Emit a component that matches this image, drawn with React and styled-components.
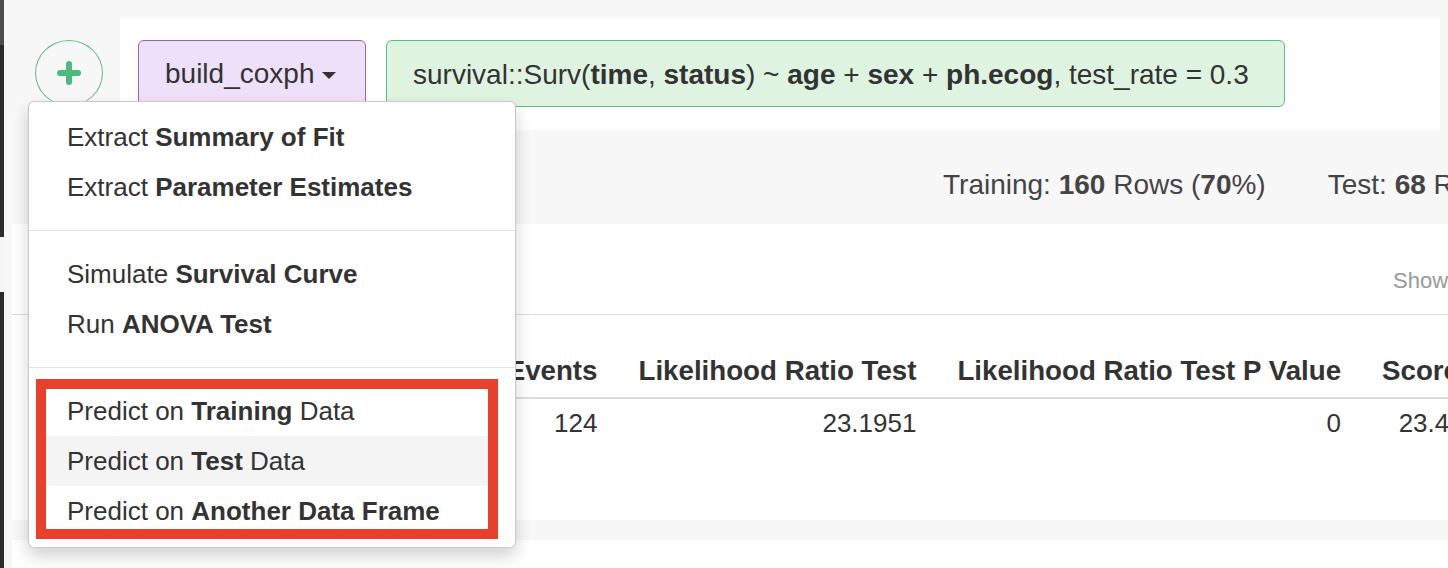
import React from 'react';
import styled, { createGlobalStyle } from 'styled-components';

const GlobalStyle = createGlobalStyle`
  html, body {
    margin: 0;
    padding: 0;
    background: #f7f7f7;
    font-family: "Liberation Sans", Arial, sans-serif;
    color: #333;
    overflow: hidden;
  }
`;

const Page = styled.div`
  position: relative;
  display: flex;
  width: 1448px;
  height: 568px;
  overflow: hidden;
`;

const Strip = styled.div`
  width: 4px;
  display: flex;
  flex-direction: column;
  flex-shrink: 0;
`;

const StripPart = styled.div`
  height: ${(props) => props.h}px;
  flex: ${(props) => (props.h ? 'none' : 1)};
  background: ${(props) => props.color};
`;

const Main = styled.div`
  flex: 1;
  min-width: 0;
  display: flex;
  flex-direction: column;
  padding-top: 18px;
`;

const Header = styled.div`
  display: flex;
  height: 112px;
`;

const PlusArea = styled.div`
  width: 116px;
  flex-shrink: 0;
  padding: 22px 0 0 31px;
  box-sizing: border-box;
`;

const PlusCircle = styled.div`
  width: 68px;
  height: 66px;
  border: 1.5px solid #5cbd86;
  border-radius: 50%;
  box-sizing: border-box;
  display: flex;
  align-items: center;
  justify-content: center;
`;

const StepPanel = styled.div`
  width: 1320px;
  background: #fff;
  display: flex;
  align-items: flex-start;
  gap: 20px;
  padding: 22px 0 0 18px;
  box-sizing: border-box;
`;

const CommandButton = styled.div`
  width: 228px;
  height: 67px;
  box-sizing: border-box;
  border: 1.5px solid #9367b0;
  border-radius: 6px;
  background: #eee0f8;
  display: flex;
  align-items: center;
  padding-left: 26px;
  gap: 8px;
  font-size: 28px;
`;

const Caret = styled.span`
  width: 0;
  height: 0;
  border-left: 7.5px solid transparent;
  border-right: 7.5px solid transparent;
  border-top: 7.5px solid #333;
  margin-top: 3px;
`;

const FormulaBox = styled.div`
  width: 899px;
  height: 67px;
  box-sizing: border-box;
  border: 1.5px solid #5cbd86;
  border-radius: 6px;
  background: #dff3e1;
  display: flex;
  align-items: center;
  padding: 2px 0 0 26px;
  font-size: 28px;
  white-space: nowrap;
`;

const SplitBar = styled.div`
  height: 94px;
  display: flex;
  align-items: center;
  padding: 16px 0 0 939px;
  box-sizing: border-box;
  gap: 62px;
  font-size: 28px;
  color: #444;
  white-space: nowrap;
`;

const TablePanel = styled.div`
  height: 296px;
  margin-left: 8px;
  background: #fff;
  overflow: hidden;
`;

const Toolbar = styled.div`
  height: 91px;
  box-sizing: border-box;
  border-bottom: 1px solid #ddd;
  padding: 44px 0 0 1381px;
  font-size: 22px;
  color: #999;
  white-space: nowrap;
`;

const Table = styled.table`
  margin: 28px 0 0 295px;
  border-collapse: collapse;
  white-space: nowrap;
`;

const HeadCell = styled.th`
  height: 52px;
  min-width: ${(props) => props.$w || 0}px;
  padding: 2px 20.5px 0;
  text-align: right;
  font-size: 27.7px;
  font-weight: 700;
  border-bottom: 2px solid #ddd;
`;

const Cell = styled.td`
  height: 46px;
  padding: 1px 20.5px 0;
  text-align: right;
  font-size: 26px;
`;

const Band = styled.div`
  height: 20px;
`;

const BottomPanel = styled.div`
  flex: 1;
  margin-left: 8px;
  background: #fff;
`;

const Menu = styled.div`
  position: absolute;
  left: 28px;
  top: 101px;
  width: 488px;
  box-sizing: border-box;
  background: #fff;
  border: 1px solid #c8c8c8;
  border-radius: 6px;
  box-shadow: 0 8px 16px rgba(0, 0, 0, 0.18);
  padding: 10px 0 11px;
  font-size: 26px;
`;

const Section = styled.div`
  position: relative;
`;

const Highlight = styled.div`
  position: absolute;
  left: 7px;
  right: 17px;
  top: -7px;
  bottom: -3px;
  border: 10px solid #e8402a;
  pointer-events: none;
`;

const Item = styled.div`
  height: 50px;
  display: flex;
  align-items: center;
  padding-left: ${(props) => (props.$active ? 30 : 38)}px;
  margin: ${(props) => (props.$active ? '0 18px 0 8px' : '0')};
  background: ${(props) => (props.$active ? '#f4f4f4' : 'transparent')};
  white-space: nowrap;
`;

const Divider = styled.div`
  height: 1px;
  background: #e2e2e2;
  margin: 18px 0;
`;

const PlusIcon = () => (
  <svg width="24" height="24" viewBox="0 0 24 24">
    <path d="M12 3v18M3 12h18" stroke="#4cb97e" strokeWidth="6" strokeLinecap="round" />
  </svg>
);

const columns = [
  { title: 'Number of Events', value: '124', w: 270 },
  { title: 'Likelihood Ratio Test', value: '23.1951' },
  { title: 'Likelihood Ratio Test P Value', value: '0' },
  { title: 'Score Test', value: '23.498415' },
  { title: 'Score Test P Value', value: '0' },
  { title: 'Wald Test', value: '22.8731' },
];

const App = () => (
  <Page>
    <GlobalStyle />
    <Strip>
      <StripPart h={45} color="#4d4d4d" />
      <StripPart h={192} color="#2b2b2b" />
      <StripPart h={55} color="#f4f4f4" />
      <StripPart color="#2b2b2b" />
    </Strip>
    <Main>
      <Header>
        <PlusArea>
          <PlusCircle>
            <PlusIcon />
          </PlusCircle>
        </PlusArea>
        <StepPanel>
          <CommandButton>
            build_coxph
            <Caret />
          </CommandButton>
          <FormulaBox>
            survival::Surv(<b>time</b>,&nbsp;<b>status</b>) ~&nbsp;<b>age</b>&nbsp;+&nbsp;<b>sex</b>&nbsp;+&nbsp;<b>ph.ecog</b>, test_rate = 0.3
          </FormulaBox>
        </StepPanel>
      </Header>
      <SplitBar>
        <span>Training: <b>160</b> Rows (<b>70</b>%)</span>
        <span>Test: <b>68</b> Rows (<b>30</b>%)</span>
      </SplitBar>
      <TablePanel>
        <Toolbar>Show 10 rows</Toolbar>
        <Table>
          <thead>
            <tr>
              {columns.map((col) => (
                <HeadCell key={col.title} $w={col.w}>{col.title}</HeadCell>
              ))}
            </tr>
          </thead>
          <tbody>
            <tr>
              {columns.map((col) => (
                <Cell key={col.title}>{col.value}</Cell>
              ))}
            </tr>
          </tbody>
        </Table>
      </TablePanel>
      <Band />
      <BottomPanel />
    </Main>
    <Menu>
      <Section>
        <Item>Extract&nbsp;<b>Summary of Fit</b></Item>
        <Item>Extract&nbsp;<b>Parameter Estimates</b></Item>
      </Section>
      <Divider />
      <Section>
        <Item>Simulate&nbsp;<b>Survival Curve</b></Item>
        <Item>Run&nbsp;<b>ANOVA Test</b></Item>
      </Section>
      <Divider />
      <Section>
        <Item>Predict on&nbsp;<b>Training</b>&nbsp;Data</Item>
        <Item $active>Predict on&nbsp;<b>Test</b>&nbsp;Data</Item>
        <Item>Predict on&nbsp;<b>Another Data Frame</b></Item>
        <Highlight />
      </Section>
    </Menu>
  </Page>
);

export default App;
